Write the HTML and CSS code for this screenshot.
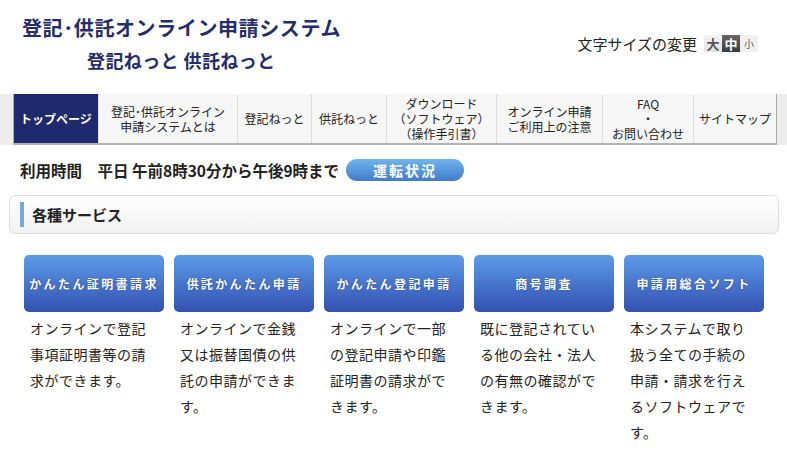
FILE: index.html
```html
<!DOCTYPE html>
<html lang="ja">
<head>
    <meta charset="UTF-8">
    <meta name="viewport" content="width=device-width, initial-scale=1.0">
    <title>登記・供託オンライン申請システム</title>
    <link rel="stylesheet" href="styles.css">
</head>
<body>
    <div class="header">
        <div class="site-title">
            <h1>登記･供託オンライン申請システム</h1>
            <p class="sub-title">登記ねっと 供託ねっと</p>
        </div>
        <div class="font-size">
            <span class="font-size-label">文字サイズの変更</span>
            <span class="size-btn large">大</span>
            <span class="size-btn middle active">中</span>
            <span class="size-btn small">小</span>
        </div>
    </div>

    <div class="nav-bar">
        <ul class="nav">
            <li class="current">トップページ</li>
            <li>登記･供託オンライン<br>申請システムとは</li>
            <li>登記ねっと</li>
            <li>供託ねっと</li>
            <li>ダウンロード<br>（ソフトウェア）<br>（操作手引書）</li>
            <li>オンライン申請<br>ご利用上の注意</li>
            <li>FAQ<br>・<br>お問い合わせ</li>
            <li>サイトマップ</li>
        </ul>
    </div>

    <div class="hours">
        <span>利用時間　平日 午前8時30分から午後9時まで</span>
        <a class="status-btn" href="#">運転状況</a>
    </div>

    <div class="section-title">
        <h2>各種サービス</h2>
    </div>

    <div class="services">
        <div class="service">
            <a class="service-btn" href="#">かんたん証明書請求</a>
            <p>オンラインで登記事項証明書等の請求ができます。</p>
        </div>
        <div class="service">
            <a class="service-btn" href="#">供託かんたん申請</a>
            <p>オンラインで金銭又は振替国債の供託の申請ができます。</p>
        </div>
        <div class="service">
            <a class="service-btn" href="#">かんたん登記申請</a>
            <p>オンラインで一部の登記申請や印鑑証明書の請求ができます。</p>
        </div>
        <div class="service">
            <a class="service-btn" href="#">商号調査</a>
            <p>既に登記されている他の会社・法人の有無の確認ができます。</p>
        </div>
        <div class="service">
            <a class="service-btn" href="#">申請用総合ソフト</a>
            <p>本システムで取り扱う全ての手続の申請・請求を行えるソフトウェアです。</p>
        </div>
    </div>
</body>
</html>
```

FILE: styles.css
```css
body {
    margin: 0;
    padding: 0;
    font-family: "Noto Sans CJK JP", "Noto Sans", sans-serif;
    color: #222;
    background-color: white;
}
.header {
    display: flex;
    justify-content: space-between;
    height: 94px;
}
.site-title {
    padding: 13px 0 0 22px;
    color: #232d6d;
}
.site-title h1 {
    margin: 0;
    font-size: 20px;
    line-height: 30px;
    letter-spacing: 0.6px;
    font-weight: bold;
}
.sub-title {
    margin: 4px 0 0 65px;
    font-size: 18px;
    line-height: 26px;
    letter-spacing: 0.4px;
    font-weight: bold;
}
.font-size {
    display: flex;
    align-items: center;
    height: 18px;
    margin: 34px 29px 0 0;
}
.font-size-label {
    font-size: 15px;
    margin-right: 7px;
}
.size-btn {
    width: 18px;
    height: 17px;
    line-height: 17px;
    text-align: center;
    font-size: 13px;
    font-weight: bold;
    color: #555;
    background: linear-gradient(#f4f4f4, #e2e2e2);
}
.size-btn.active {
    color: white;
    background: linear-gradient(#666, #3c3c3c);
}
.size-btn.small {
    font-size: 10px;
    font-weight: normal;
    background: #f0f0f0;
}
.nav-bar {
    background-color: #ececec;
    padding-left: 13px;
    height: 51px;
}
.nav {
    display: grid;
    grid-template-columns: 84px 139px 74px 75px 110px 106px 91px 83px;
    margin: 0;
    padding: 0;
    list-style: none;
    width: 762px;
    height: 49px;
    border-left: 1px solid #aaa;
    border-right: 1px solid #aaa;
    border-bottom: 2px solid #b4b4b4;
    background-color: #f6f6f6;
}
.nav li {
    display: flex;
    align-items: center;
    justify-content: center;
    text-align: center;
    font-size: 12px;
    line-height: 15px;
    border-left: 1px solid #ddd;
}
.nav li:first-child {
    border-left: none;
}
.nav li.current {
    background-color: #1e2a6b;
    color: white;
    font-weight: bold;
}
.hours {
    display: flex;
    align-items: center;
    padding: 14px 0 0 20px;
    font-size: 15.5px;
    font-weight: bold;
}
.status-btn {
    display: block;
    width: 118px;
    height: 22px;
    line-height: 22px;
    margin-left: 7px;
    border-radius: 11px;
    text-align: center;
    font-size: 14px;
    color: white;
    text-decoration: none;
    letter-spacing: 2px;
    background: linear-gradient(#71b4ec, #3f7ccb);
}
.section-title {
    display: flex;
    align-items: center;
    margin: 14px 8px 0 9px;
    height: 37px;
    border: 1px solid #ddd;
    border-radius: 6px;
    background: linear-gradient(#ffffff, #f1f1f1);
}
.section-title h2 {
    margin: 0 0 0 10px;
    padding-left: 8px;
    border-left: 4px solid #79a7da;
    font-size: 15px;
    line-height: 25px;
}
.services {
    display: flex;
    gap: 10px;
    padding: 21px 0 0 24px;
}
.service {
    width: 140px;
}
.service-btn {
    display: flex;
    align-items: center;
    justify-content: center;
    height: 57px;
    border-radius: 5px;
    color: white;
    text-decoration: none;
    font-size: 12px;
    font-weight: bold;
    letter-spacing: 2.4px;
    text-shadow: 0 0 2px rgba(20, 40, 110, 0.6);
    background: linear-gradient(#5c9be8, #3451b1);
}
.service p {
    margin: 3px 0 0;
    padding: 0 12px 0 6px;
    font-size: 14px;
    line-height: 26px;
    letter-spacing: 0.5px;
}
```
